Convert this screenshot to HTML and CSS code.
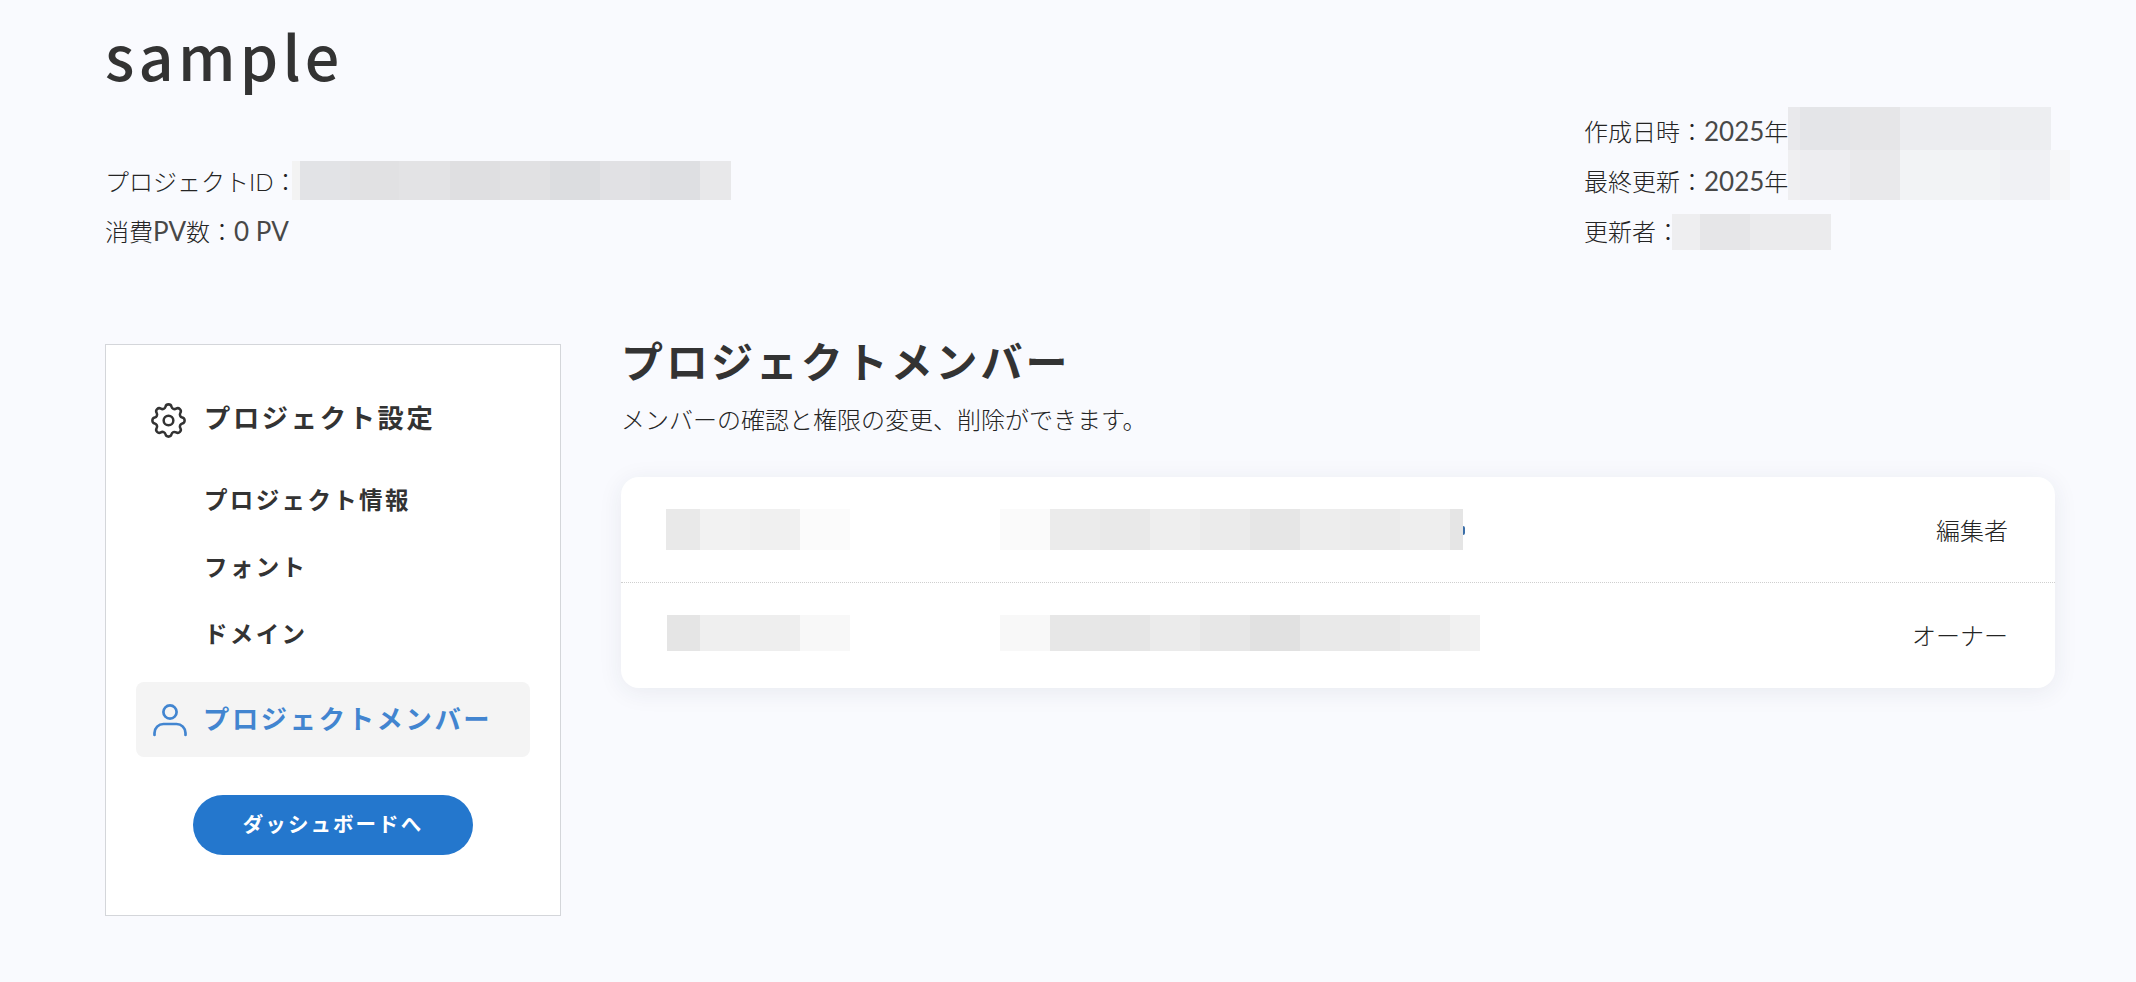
FILE: index.html
```html
<!DOCTYPE html>
<html lang="ja">
<head>
<meta charset="utf-8">
<title>プロジェクトメンバー</title>
<link rel="stylesheet" href="styles.css">
</head>
<body>
<div class="page">
  <header class="head">
    <div class="head-left">
      <h1 class="title">sample</h1>
      <div class="meta-row">プロジェクトID：<span class="redact r-id"></span></div>
      <div class="meta-row"><span>消費<span class="num">PV</span>数：<span class="num">0 PV</span></span></div>
    </div>
    <div class="head-right">
      <div class="meta-row"><span>作成日時：<span class="num">2025</span>年</span><span class="redact r-created"></span></div>
      <div class="meta-row"><span>最終更新：<span class="num">2025</span>年</span><span class="redact r-updated"></span></div>
      <div class="meta-row">更新者：<span class="redact r-user"></span></div>
    </div>
  </header>
  <div class="body">
    <aside class="side">
      <div class="side-head">
        <svg class="icon icon-gear" viewBox="0 0 24 24" fill="none" stroke="currentColor" stroke-width="1.4" stroke-linecap="round" stroke-linejoin="round"><path d="M10.325 4.317c.426-1.756 2.924-1.756 3.35 0a1.724 1.724 0 0 0 2.573 1.066c1.543-.94 3.31.826 2.37 2.37a1.724 1.724 0 0 0 1.065 2.572c1.756.426 1.756 2.924 0 3.35a1.724 1.724 0 0 0-1.066 2.573c.94 1.543-.826 3.31-2.37 2.37a1.724 1.724 0 0 0-2.572 1.065c-.426 1.756-2.924 1.756-3.35 0a1.724 1.724 0 0 0-2.573-1.066c-1.543.94-3.31-.826-2.37-2.37a1.724 1.724 0 0 0-1.065-2.572c-1.756-.426-1.756-2.924 0-3.35a1.724 1.724 0 0 0 1.066-2.573c-.94-1.543.826-3.31 2.37-2.37 1 .608 2.296.07 2.572-1.065z"/><circle cx="12" cy="12" r="2.7"/></svg>
        <span>プロジェクト設定</span>
      </div>
      <nav class="side-nav">
        <a class="side-link">プロジェクト情報</a>
        <a class="side-link">フォント</a>
        <a class="side-link">ドメイン</a>
      </nav>
      <div class="side-active">
        <svg class="icon" viewBox="0 0 46 46" fill="none" stroke="currentColor" stroke-width="2.7" stroke-linecap="round" stroke-linejoin="round"><circle cx="24" cy="15" r="6.6"/><path d="M8.5 38v-2a9 9 0 0 1 9-9h13a9 9 0 0 1 9 9v2"/></svg>
        <span class="side-active-label">プロジェクトメンバー</span>
      </div>
      <a class="dash-btn">ダッシュボードへ</a>
    </aside>
    <main class="main">
      <h2 class="main-title">プロジェクトメンバー</h2>
      <p class="main-sub">メンバーの確認と権限の変更、削除ができます。</p>
      <section class="card">
        <div class="row">
          <span class="redact r-name1"></span>
          <span class="redact r-mail1"></span>
          <span class="role">編集者</span>
        </div>
        <div class="row row-second">
          <span class="redact r-name2"></span>
          <span class="redact r-mail2"></span>
          <span class="role role-second">オーナー</span>
        </div>
      </section>
    </main>
  </div>
</div>
</body>
</html>
```
FILE: styles.css
```css
* { box-sizing: border-box; }
html, body { margin: 0; padding: 0; }
body {
  background: #f9fafe;
  color: #242424;
  font-family: "Lato", "Noto Sans CJK JP", sans-serif;
  font-size: 24px;
  font-weight: 300;
  height: 982px;
  overflow: hidden;
}
.page { padding: 0 81px 0 105px; }

.head { display: flex; justify-content: space-between; align-items: flex-end; height: 257px; }
.head-left { display: flex; flex-direction: column; }
.head-right { width: 471px; flex: none; }
.title {
  margin: 0;
  height: 157px;
  padding-top: 11px;
  font-family: "Noto Sans CJK JP", sans-serif;
  color: #333;
  font-size: 61px;
  line-height: 88px;
  font-weight: 500;
  letter-spacing: 0.07em;
}
.meta-row { display: flex; height: 50px; line-height: 50px; white-space: nowrap; }
.num { font-size: 26px; font-weight: 400; line-height: 1; color: #484848; }

.redact { display: block; flex: none; }
.r-id {
  width: 439px; height: 39px; margin-top: 4px; margin-left: -6px;
  background: linear-gradient(90deg, #f3f3f3 8px, #e2e3e6 8px 58px, #e1e1e3 58px 107px, #e3e3e5 107px 158px, #dfdfe1 158px 208px, #e1e1e3 208px 258px, #dcdde0 258px 308px, #e1e1e4 308px 358px, #dedfe2 358px 408px, #e8e8ea 408px);
}
.r-created {
  width: 263px; height: 43px;
  background: linear-gradient(90deg, #e9e9ec 12px, #e4e5e8 12px 62px, #e6e6e8 62px 112px, #ecedf0 112px 212px, #edeef1 212px);
}
.r-updated {
  width: 282px; height: 50px; margin-top: -7px;
  background: linear-gradient(90deg, #efeff1 12px, #ededf0 12px 62px, #e9e9eb 62px 112px, #f2f3f5 112px 212px, #f0f1f4 212px 262px, #f6f7f9 262px);
}
.r-user {
  width: 159px; height: 36px; margin-top: 7px; margin-left: -8px;
  background: linear-gradient(90deg, #eeeef0 28px, #e6e6e8 28px 78px, #ebebed 78px);
}

.body { display: flex; gap: 60px; margin-top: 87px; align-items: flex-start; }
.side {
  flex: none;
  width: 456px;
  height: 572px;
  background: #fff;
  border: 1px solid #d4d6da;
  padding: 48px 30px 0;
  display: flex;
  flex-direction: column;
}
.icon { width: 46px; height: 46px; flex: none; }
.icon-gear { width: 43px; height: 43px; margin: 8px 3px 0 1px; }
.side-head, .side-active {
  display: flex;
  align-items: center;
  gap: 11px;
  font-size: 26.3px;
  font-weight: 700;
  letter-spacing: 0.1em;
  color: #333;
}
.side-head { padding-left: 10px; height: 46px; }
.side-nav { display: flex; flex-direction: column; margin-top: 28px; }
.side-link {
  height: 67px;
  line-height: 67px;
  padding-left: 68px;
  font-size: 23.5px;
  font-weight: 700;
  letter-spacing: 0.1em;
  color: #333;
}
.side-active {
  height: 75px;
  margin-top: 14px;
  padding-left: 10px;
  background: #f4f4f4;
  border-radius: 8px;
  color: #4285d0;
}
.side-active-label { margin-bottom: 4px; }
.dash-btn {
  display: block;
  align-self: center;
  width: 280px;
  height: 60px;
  margin-top: 38px;
  border-radius: 30px;
  background: #2477cd;
  color: #fff;
  text-align: center;
  line-height: 58px;
  font-size: 20.5px;
  font-weight: 700;
  letter-spacing: 0.1em;
}

.main { flex: 1; min-width: 0; }
.main-title { margin: -14px 0 0; color: #333; font-size: 42px; font-weight: 700; line-height: 60px; letter-spacing: 0.07em; font-family: "Noto Sans CJK JP", sans-serif; }
.main-sub { margin: 12px 0 0; line-height: 36px; }
.card {
  margin-top: 39px;
  background: #fff;
  border-radius: 18px;
  box-shadow: 0 4px 24px rgba(40, 50, 80, 0.08);
  overflow: hidden;
}
.row { display: flex; align-items: center; height: 105px; padding: 0 47px 0 45px; }
.row-second { border-top: 1px dotted #cfcfcf; height: 106px; }
.role { margin-left: auto; }
.role-second { margin-bottom: 2px; }
.r-name1 {
  width: 184px; height: 41px; margin-right: 150px;
  background: linear-gradient(90deg, #e9e9e9 34px, #f2f2f2 34px 84px, #f0f0f0 84px 134px, #fbfbfb 134px);
}
.r-mail1 {
  position: relative;
  width: 463px; height: 41px;
  background: linear-gradient(90deg, #fafafa 50px, #ebebeb 50px 100px, #e9e9e9 100px 150px, #eeeeee 150px 200px, #ebebeb 200px 250px, #e6e6e6 250px 300px, #ededed 300px 350px, #ebebeb 350px 400px, #eeeeee 400px 450px, #e5e5e5 450px);
}
.r-mail1::after {
  content: "";
  position: absolute;
  left: 100%;
  top: 17px;
  width: 2px;
  height: 9px;
  border-radius: 0 2px 2px 0;
  background: #3a6ea8;
}
.r-name2 {
  width: 183px; height: 36px; margin: 0 150px 6px 1px;
  background: linear-gradient(90deg, #e5e5e5 33px, #efefef 33px 83px, #eeeeee 83px 133px, #f8f8f8 133px);
}
.r-mail2 {
  width: 480px; height: 36px; margin-bottom: 6px;
  background: linear-gradient(90deg, #f8f8f8 50px, #e7e7e7 50px 100px, #e6e6e6 100px 150px, #ebebeb 150px 200px, #e7e7e7 200px 250px, #e1e1e1 250px 300px, #e9e9e9 300px 350px, #e8e8e8 350px 400px, #ebebeb 400px 450px, #f1f1f1 450px);
}
```
